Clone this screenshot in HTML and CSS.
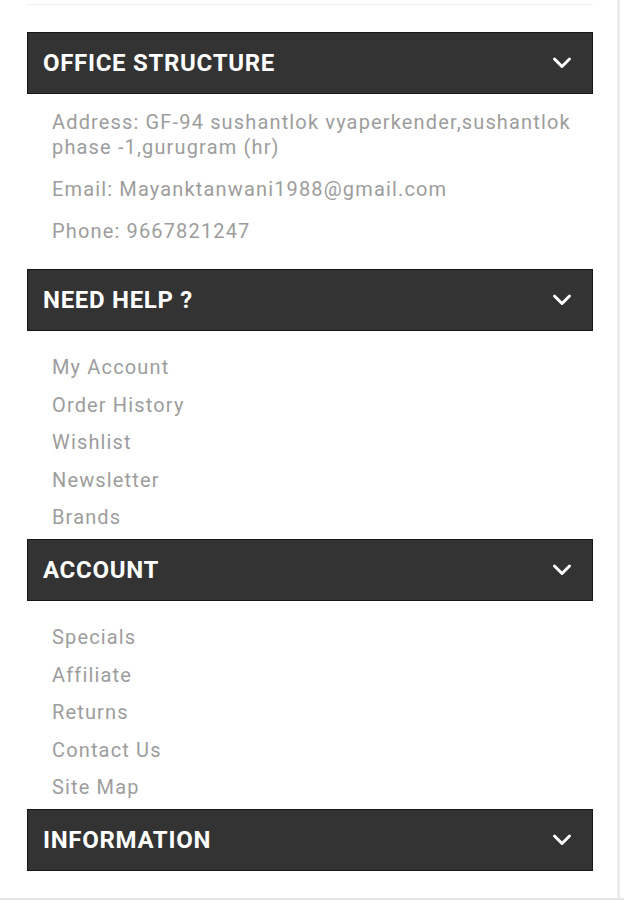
FILE: index.html
```html
<!DOCTYPE html>
<html lang="en">
<head>
<meta charset="utf-8">
<title>Footer</title>
<link rel="stylesheet" href="styles.css">
</head>
<body>
<div class="page">
  <div class="panel">
    <div class="topline"></div>

    <section class="block">
      <div class="bar"><h3>OFFICE STRUCTURE</h3><svg class="chev" viewBox="0 0 20 14" width="20" height="14"><polyline points="2.5,3 10,10.5 17.5,3"/></svg></div>
      <div class="info">
        <p>Address: GF-94 sushantlok vyaperkender,sushantlok phase -1,gurugram (hr)</p>
        <p>Email: Mayanktanwani1988@gmail.com</p>
        <p>Phone: 9667821247</p>
      </div>
    </section>

    <section class="block">
      <div class="bar"><h3>NEED HELP ?</h3><svg class="chev" viewBox="0 0 20 14" width="20" height="14"><polyline points="2.5,3 10,10.5 17.5,3"/></svg></div>
      <ul class="links">
        <li>My Account</li>
        <li>Order History</li>
        <li>Wishlist</li>
        <li>Newsletter</li>
        <li>Brands</li>
      </ul>
    </section>

    <section class="block">
      <div class="bar"><h3>ACCOUNT</h3><svg class="chev" viewBox="0 0 20 14" width="20" height="14"><polyline points="2.5,3 10,10.5 17.5,3"/></svg></div>
      <ul class="links">
        <li>Specials</li>
        <li>Affiliate</li>
        <li>Returns</li>
        <li>Contact Us</li>
        <li>Site Map</li>
      </ul>
    </section>

    <section class="block">
      <div class="bar"><h3>INFORMATION</h3><svg class="chev" viewBox="0 0 20 14" width="20" height="14"><polyline points="2.5,3 10,10.5 17.5,3"/></svg></div>
    </section>
  </div>
</div>
</body>
</html>
```
FILE: styles.css
```css
html, body {
  margin: 0;
  padding: 0;
  background: #fff;
}
body {
  font-family: Roboto, "Liberation Sans", Arial, sans-serif;
}
.page {
  width: 624px;
  height: 900px;
  box-sizing: border-box;
  border-bottom: 2px solid #e6e6e6;
  position: relative;
  overflow: hidden;
}
.page::after {
  content: "";
  position: absolute;
  top: 0;
  bottom: 0;
  left: 617px;
  width: 3px;
  background: #ececec;
}
.panel {
  margin-left: 27px;
  width: 566px;
}
.topline {
  height: 1px;
  background: #efefef;
  margin-top: 4px;
  margin-bottom: 27px;
}
.bar {
  height: 62px;
  box-sizing: border-box;
  background: #333333;
  border: 1px solid #161616;
  display: flex;
  align-items: center;
  justify-content: space-between;
  padding: 0 20px 0 15px;
}
.bar h3 {
  margin: 0;
  color: #fff;
  font-size: 24px;
  font-weight: 700;
  letter-spacing: 0.7px;
}
.chev {
  display: block;
}
.chev polyline {
  fill: none;
  stroke: #fff;
  stroke-width: 3;
  stroke-linecap: round;
  stroke-linejoin: round;
}
.info {
  padding: 16px 0 25px 25px;
}
.info p {
  margin: 0 0 17px;
  color: #9d9d9d;
  font-size: 20px;
  line-height: 25px;
  letter-spacing: 1.15px;
}
.info p:last-child {
  margin-bottom: 0;
}
.links {
  list-style: none;
  margin: 0;
  padding: 18px 0 2px 25px;
}
.links li {
  color: #9d9d9d;
  font-size: 20px;
  line-height: 37.6px;
  letter-spacing: 1.15px;
}
```
